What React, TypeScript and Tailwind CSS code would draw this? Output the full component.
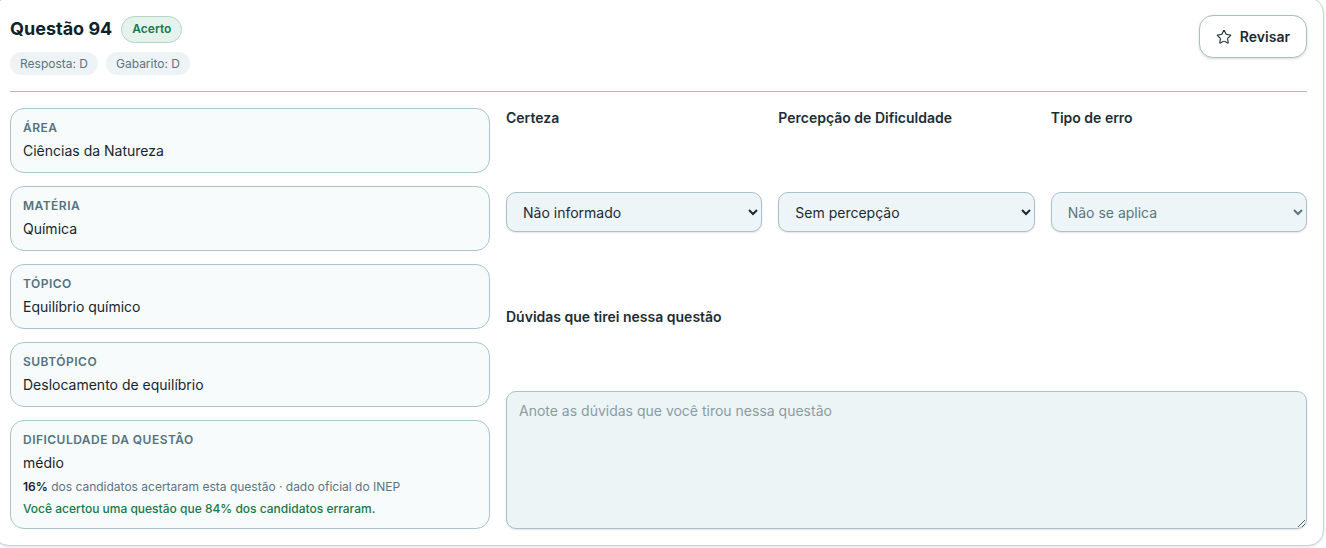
import React from "react";
import { Star } from "lucide-react";

function InfoCard({ label, value }: { label: string; value: string }) {
  return (
    <div className="rounded-[14px] border border-[#a9c5cb] bg-[#f8fbfc] px-3 pt-[11px] pb-[11px]">
      <div className="text-[12px] leading-4 font-semibold tracking-[0.04em] uppercase text-[#52737e]">{label}</div>
      <div className="mt-[5px] text-[14px] leading-5 text-[#17262c]">{value}</div>
    </div>
  );
}

function Select({ value, muted }: { value: string; muted?: boolean }) {
  return (
    <select
      defaultValue={value}
      className={`h-10 w-full rounded-[10px] border border-[#a9c2c8] bg-[#eef5f8] pl-3 pr-2 text-[14px] shadow-[0_1px_2px_rgba(0,0,0,0.12)] outline-none ${muted ? "text-[#5b7580]" : "text-[#1c2b31]"}`}
    >
      <option value={value}>{value}</option>
    </select>
  );
}

export default function App() {
  return (
    <div className="min-h-[548px] w-[1326px] overflow-hidden bg-white" style={{ fontFamily: "Inter, 'Noto Sans', sans-serif" }}>
      <div className="-ml-[7px] -mt-[3px] w-[1331px] rounded-2xl border border-[#c7d5d9] bg-white px-4 pt-[17px] pb-4 shadow-[0_1px_3px_rgba(0,0,0,0.12)]">
        <div className="flex items-start justify-between">
          <div className="flex flex-col gap-[9px]">
            <div className="flex items-center gap-[9px]">
              <h2 className="text-[18px] leading-7 font-bold text-[#10232a]">Questão 94</h2>
              <span className="flex h-[27px] items-center rounded-full border border-[#b3d6c2] bg-[#e6f3ec] px-[10px] text-[12px] font-semibold text-[#157a47]">Acerto</span>
            </div>
            <div className="flex items-center gap-2">
              <span className="flex h-[23px] items-center rounded-full bg-[#edf3f6] px-[10px] text-[12px] text-[#5b7580]">Resposta: D</span>
              <span className="flex h-[23px] items-center rounded-full bg-[#edf3f6] px-[10px] text-[12px] text-[#5b7580]">Gabarito: D</span>
            </div>
          </div>
          <button className="flex h-[43px] items-center gap-2 rounded-[14px] border border-[#a9bfc5] bg-white px-4 text-[14px] font-semibold text-[#1a2b31] shadow-[0_1px_3px_rgba(0,0,0,0.15)]">
            <Star size={16} strokeWidth={1.6} />
            Revisar
          </button>
        </div>

        <div className="mt-4 border-t border-[#a6bfc6]" />

        <div className="mt-4 grid grid-cols-[480px_1fr] gap-4">
          <div className="flex flex-col gap-[13px]">
            <InfoCard label="Área" value="Ciências da Natureza" />
            <InfoCard label="Matéria" value="Química" />
            <InfoCard label="Tópico" value="Equilíbrio químico" />
            <InfoCard label="Subtópico" value="Deslocamento de equilíbrio" />
            <div className="rounded-[14px] border border-[#a9c5cb] bg-[#f8fbfc] px-3 pt-[11px] pb-[11px]">
              <div className="text-[12px] leading-4 font-semibold tracking-[0.04em] uppercase text-[#52737e]">Dificuldade da questão</div>
              <div className="mt-[5px] text-[14px] leading-5 text-[#17262c]">médio</div>
              <div className="mt-[6px] text-[12px] leading-4 text-[#5b7580]">
                <span className="font-semibold text-[#17262c]">16%</span> dos candidatos acertaram esta questão · dado oficial do INEP
              </div>
              <div className="mt-[6px] text-[12px] leading-4 font-medium text-[#157a47]">Você acertou uma questão que 84% dos candidatos erraram.</div>
            </div>
          </div>

          <div className="flex flex-col">
            <div className="grid grid-cols-3 gap-4">
              <div className="flex flex-col">
                <div className="text-[14px] leading-5 font-semibold text-[#1c2e35]">Certeza</div>
                <div className="mt-16"><Select value="Não informado" /></div>
              </div>
              <div className="flex flex-col">
                <div className="text-[14px] leading-5 font-semibold text-[#1c2e35]">Percepção de Dificuldade</div>
                <div className="mt-16"><Select value="Sem percepção" /></div>
              </div>
              <div className="flex flex-col">
                <div className="text-[14px] leading-5 font-semibold text-[#1c2e35]">Tipo de erro</div>
                <div className="mt-16"><Select value="Não se aplica" muted /></div>
              </div>
            </div>
            <div className="mt-[75px] text-[14px] leading-5 font-semibold text-[#1c2e35]">Dúvidas que tirei nessa questão</div>
            <textarea
              placeholder="Anote as dúvidas que você tirou nessa questão"
              className="mt-16 h-[138px] w-full rounded-[10px] border border-[#a9c2c8] bg-[#edf4f6] px-3 py-2 text-[14px] text-[#1c2b31] placeholder:text-[#8a9ca2] shadow-[0_1px_2px_rgba(0,0,0,0.12)] outline-none"
            />
          </div>
        </div>
      </div>
    </div>
  );
}
